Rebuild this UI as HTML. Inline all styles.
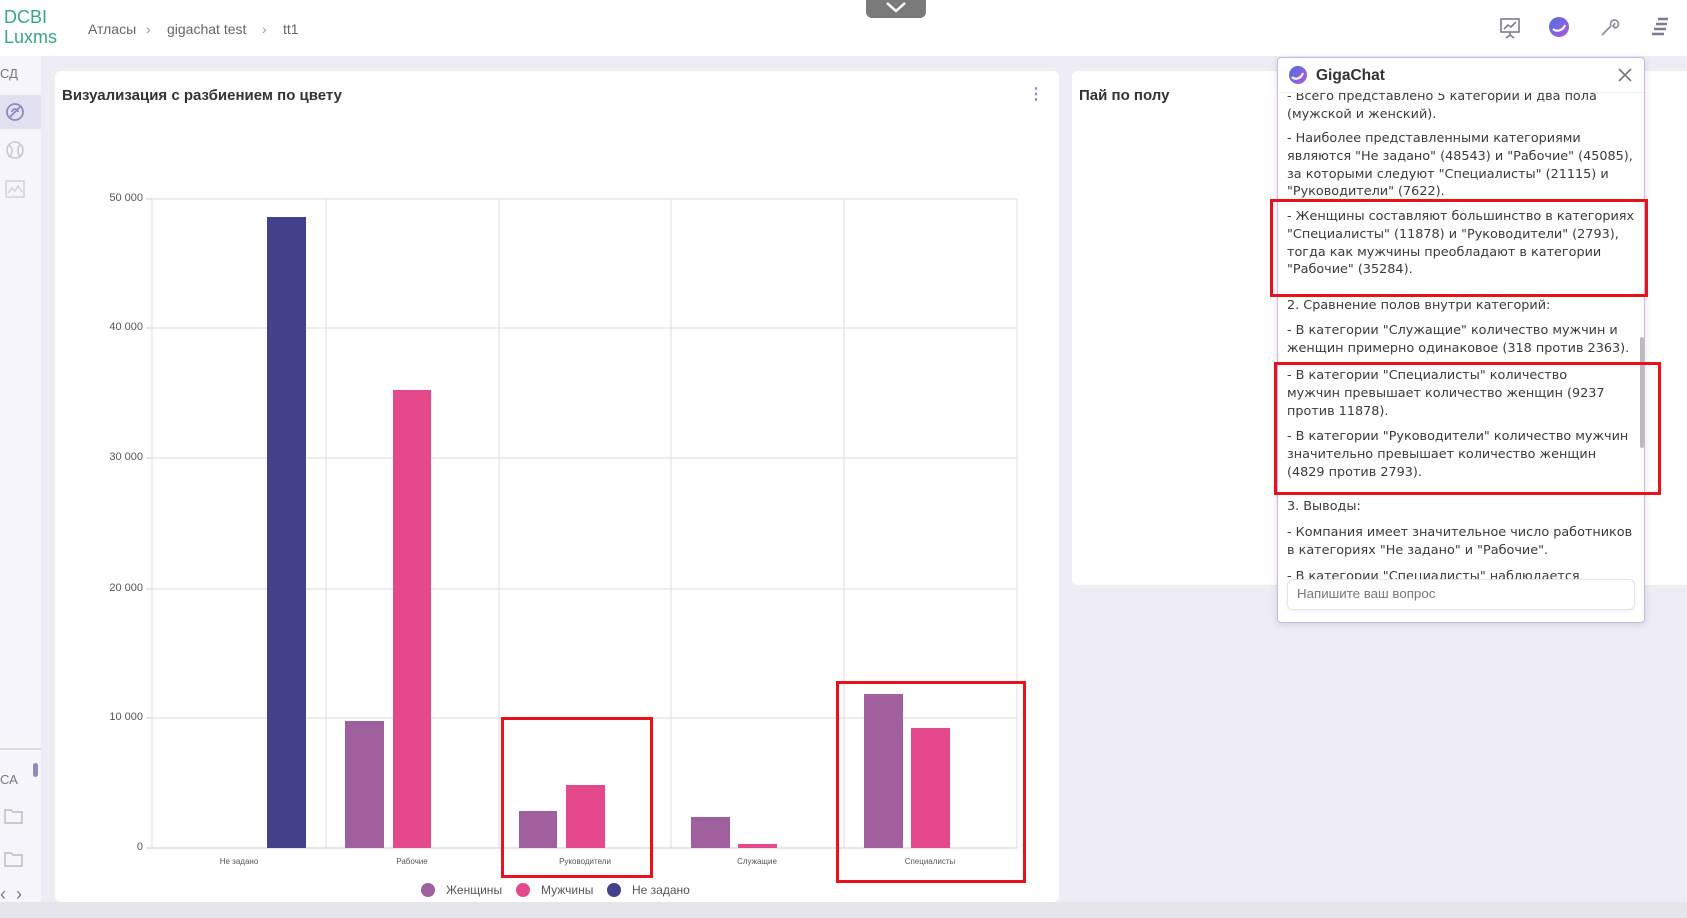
<!DOCTYPE html>
<html><head><meta charset="utf-8"><style>
*{margin:0;padding:0;box-sizing:border-box}
body{width:1687px;height:918px;overflow:hidden;background:#eeedf5;font-family:"Liberation Sans",sans-serif;position:relative;color:#333}
.a{position:absolute}
.top{left:0;top:0;width:1687px;height:56px;background:#fff}
.logo{left:4px;top:7px;color:#3aa57f;font-size:18px;line-height:20px}
.bc{top:21px;font-size:14px;color:#666}
.side{left:0;top:56px;width:41px;height:846px;background:#f6f6fa}
.panel{background:#fff;border-radius:6px}
.ttl{font-size:15px;font-weight:bold;color:#333}
.yl{font-size:11px;color:#555;text-align:right;width:60px}
.xl{font-size:8px;color:#555;text-align:center;width:120px}
.red{border:3px solid #e8121c}
.ch{font-family:"DejaVu Sans",sans-serif;font-size:12.8px;line-height:17.8px;color:#3a3a3a;white-space:nowrap}
</style></head><body>
<div class="a top"></div>
<div class="a logo">DCBI<br>Luxms</div>
<div class="a bc" style="left:88px">Атласы</div>
<div class="a bc" style="left:146px;color:#999">›</div>
<div class="a bc" style="left:167px">gigachat test</div>
<div class="a bc" style="left:262px;color:#999">›</div>
<div class="a bc" style="left:283px">tt1</div>
<div class="a" style="left:866px;top:0;width:60px;height:18px;background:#7a7a7a;border-radius:0 0 6px 6px"></div>
<svg class="a" style="left:884px;top:1px" width="24" height="14"><path d="M3 2l9 8 9-8" stroke="#fff" stroke-width="2.5" fill="none"/></svg>
<svg class="a" style="left:1498px;top:16px" width="24" height="24" fill="none" stroke="#7c7c8c" stroke-width="1.6"><rect x="3" y="3" width="18" height="13"/><path d="M6 13l4-4 3 2 5-5M12 16v3M8 22l4-3 4 3"/></svg>
<svg class="a" style="left:1547px;top:15px" width="24" height="24"><defs><linearGradient id="g" x1="0" y1="0" x2="1" y2="1"><stop offset="0" stop-color="#4b6fe0"/><stop offset="1" stop-color="#b25ad8"/></linearGradient></defs><circle cx="12" cy="12" r="10" fill="url(#g)"/><path d="M6 14c3 3 10 2 12-4" stroke="#fff" stroke-width="2" fill="none"/></svg>
<svg class="a" style="left:1598px;top:15px" width="24" height="24" fill="none" stroke="#8a8a9a" stroke-width="1.6"><path d="M4 20l9-9M13 11a4 4 0 1 1 4 2l-2-2 2-3"/></svg>
<svg class="a" style="left:1648px;top:15px" width="24" height="24" stroke="#7b7b95" stroke-width="2.4"><path d="M10 4h10M8 9h11M6 14h12M4 19h12"/></svg>

<div class="a side"></div>
<div class="a" style="left:0;top:66px;font-size:13px;color:#777">СД</div>
<div class="a" style="left:0;top:95px;width:41px;height:34px;background:#e2e1f0"></div>
<svg class="a" style="left:4px;top:101px" width="22" height="22" fill="none" stroke="#8f8ac0" stroke-width="1.8"><circle cx="11" cy="11" r="8"/><path d="M6 16L16 6M8 11a3 3 0 0 1 6 0"/></svg>
<svg class="a" style="left:4px;top:139px" width="22" height="22" fill="none" stroke="#c8c8d0" stroke-width="1.6"><circle cx="11" cy="11" r="8"/><path d="M5 6c4 3 4 9 0 12M17 5c-4 3-4 10 0 13"/></svg>
<svg class="a" style="left:4px;top:178px" width="22" height="22" fill="none" stroke="#cfcfd6" stroke-width="1.4"><rect x="2" y="3" width="18" height="16"/><path d="M4 15l4-5 3 3 3-5 4 6"/></svg>
<div class="a" style="left:0;top:748px;width:41px;height:2px;background:#ddd"></div>
<div class="a" style="left:0;top:772px;font-size:13px;color:#777">СА</div>
<div class="a" style="left:33px;top:763px;width:5px;height:14px;border-radius:3px;background:#8f8ac0"></div>
<svg class="a" style="left:3px;top:806px" width="22" height="20" fill="none" stroke="#bbb" stroke-width="1.4"><path d="M2 4h6l2 2h9v11H2z"/></svg>
<svg class="a" style="left:3px;top:849px" width="22" height="20" fill="none" stroke="#bbb" stroke-width="1.4"><path d="M2 4h6l2 2h9v11H2z"/></svg>
<div class="a" style="left:0;top:884px;font-size:18px;color:#777">‹ &nbsp;›</div>
<div class="a" style="left:0;top:902px;width:1687px;height:16px;background:#e5e5ea"></div>

<div class="a panel" style="left:55px;top:71px;width:1004px;height:831px"></div>
<div class="a ttl" style="left:62px;top:87px">Визуализация с разбиением по цвету</div>
<div class="a" style="left:1028px;top:84px;font-size:16px;color:#8f8ac0;font-weight:bold">⋮</div>

<svg class="a" style="left:0;top:0" width="1060" height="918">
<g stroke="#e2e2e2" stroke-width="1.2">
<path d="M152 199H1017M152 328H1017M152 458H1017M152 589H1017M152 718H1017"/>
<path d="M152 199V848M326 199V848M499 199V848M671 199V848M844 199V848M1017 199V848"/>
</g>
<path d="M146 848H1017" stroke="#ccc"/>
<path d="M146 199H152M146 328H152M146 458H152M146 589H152M146 718H152" stroke="#ccc"/>
<rect x="267" y="217" width="39" height="631" fill="#43418a"/>
<rect x="345" y="721" width="39" height="127" fill="#a0609e"/>
<rect x="393" y="390" width="38" height="458" fill="#e3498b"/>
<rect x="519" y="811" width="38" height="37" fill="#a0609e"/>
<rect x="566" y="785" width="39" height="63" fill="#e3498b"/>
<rect x="691" y="817" width="39" height="31" fill="#a0609e"/>
<rect x="738" y="844" width="39" height="4" fill="#e3498b"/>
<rect x="864" y="694" width="39" height="154" fill="#a0609e"/>
<rect x="911" y="728" width="39" height="120" fill="#e3498b"/>
</svg>
<div class="a yl" style="left:83px;top:192px">50 000</div>
<div class="a yl" style="left:83px;top:321px">40 000</div>
<div class="a yl" style="left:83px;top:451px">30 000</div>
<div class="a yl" style="left:83px;top:582px">20 000</div>
<div class="a yl" style="left:83px;top:711px">10 000</div>
<div class="a yl" style="left:83px;top:841px">0</div>
<div class="a xl" style="left:179px;top:857px">Не задано</div>
<div class="a xl" style="left:352px;top:857px">Рабочие</div>
<div class="a xl" style="left:525px;top:857px">Руководители</div>
<div class="a xl" style="left:697px;top:857px">Служащие</div>
<div class="a xl" style="left:870px;top:857px">Специалисты</div>
<div class="a" style="left:421px;top:883px;width:14px;height:14px;border-radius:50%;background:#a0609e"></div>
<div class="a" style="left:446px;top:883px;font-size:12px;color:#555">Женщины</div>
<div class="a" style="left:516px;top:883px;width:14px;height:14px;border-radius:50%;background:#e3498b"></div>
<div class="a" style="left:541px;top:883px;font-size:12px;color:#555">Мужчины</div>
<div class="a" style="left:607px;top:883px;width:14px;height:14px;border-radius:50%;background:#43418a"></div>
<div class="a" style="left:632px;top:883px;font-size:12px;color:#555">Не задано</div>
<div class="a red" style="left:501px;top:717px;width:152px;height:161px"></div>
<div class="a red" style="left:836px;top:681px;width:190px;height:202px"></div>

<div class="a panel" style="left:1072px;top:71px;width:640px;height:514px"></div>
<div class="a ttl" style="left:1079px;top:87px">Пай по полу</div>

<div class="a" style="left:1277px;top:57px;width:368px;height:566px;background:#fff;border:1.5px solid #cdb6e8;border-radius:4px;box-shadow:0 2px 8px rgba(0,0,0,.12)"></div>
<svg class="a" style="left:1287px;top:64px" width="22" height="22"><circle cx="11" cy="11" r="9" fill="url(#g)"/><path d="M5 13c3 3 9 2 11-4" stroke="#fff" stroke-width="2" fill="none"/></svg>
<div class="a" style="left:1316px;top:67px;font-size:15.5px;font-weight:bold;color:#333">GigaChat</div>
<svg class="a" style="left:1617px;top:67px" width="16" height="16" stroke="#777" stroke-width="1.6"><path d="M2 2l12 12M14 2L2 14"/></svg>
<div class="a" style="left:1279px;top:92px;width:364px;height:1px;background:#eee"></div>
<div class="a" style="left:1279px;top:93px;width:360px;height:486px;overflow:hidden">
 <div class="a ch" style="left:8px;top:-5px">- Всего представлено 5 категорий и два пола<br>(мужской и женский).</div>
 <div class="a ch" style="left:8px;top:37px">- Наиболее представленными категориями<br>являются "Не задано" (48543) и "Рабочие" (45085),<br>за которыми следуют "Специалисты" (21115) и<br>"Руководители" (7622).</div>
 <div class="a ch" style="left:8px;top:115px">- Женщины составляют большинство в категориях<br>"Специалисты" (11878) и "Руководители" (2793),<br>тогда как мужчины преобладают в категории<br>"Рабочие" (35284).</div>
 <div class="a ch" style="left:8px;top:204px">2. Сравнение полов внутри категорий:</div>
 <div class="a ch" style="left:8px;top:229px">- В категории "Служащие" количество мужчин и<br>женщин примерно одинаковое (318 против 2363).</div>
 <div class="a ch" style="left:8px;top:274px">- В категории "Специалисты" количество<br>мужчин превышает количество женщин (9237<br>против 11878).</div>
 <div class="a ch" style="left:8px;top:335px">- В категории "Руководители" количество мужчин<br>значительно превышает количество женщин<br>(4829 против 2793).</div>
 <div class="a ch" style="left:8px;top:405px">3. Выводы:</div>
 <div class="a ch" style="left:8px;top:431px">- Компания имеет значительное число работников<br>в категориях "Не задано" и "Рабочие".</div>
 <div class="a ch" style="left:8px;top:475px">- В категории "Специалисты" наблюдается</div>
</div>
<div class="a" style="left:1640px;top:337px;width:4px;height:111px;background:#bbb;border-radius:2px"></div>
<div class="a" style="left:1287px;top:579px;width:348px;height:31px;background:#fff;border:1px solid #e6e6ea;border-radius:6px;box-shadow:0 1px 3px rgba(0,0,0,.08)"></div>
<div class="a" style="left:1297px;top:586px;font-size:13.3px;color:#777">Напишите ваш вопрос</div>
<div class="a red" style="left:1270px;top:199px;width:378px;height:98px"></div>
<div class="a red" style="left:1274px;top:362px;width:387px;height:133px"></div>
</body></html>
